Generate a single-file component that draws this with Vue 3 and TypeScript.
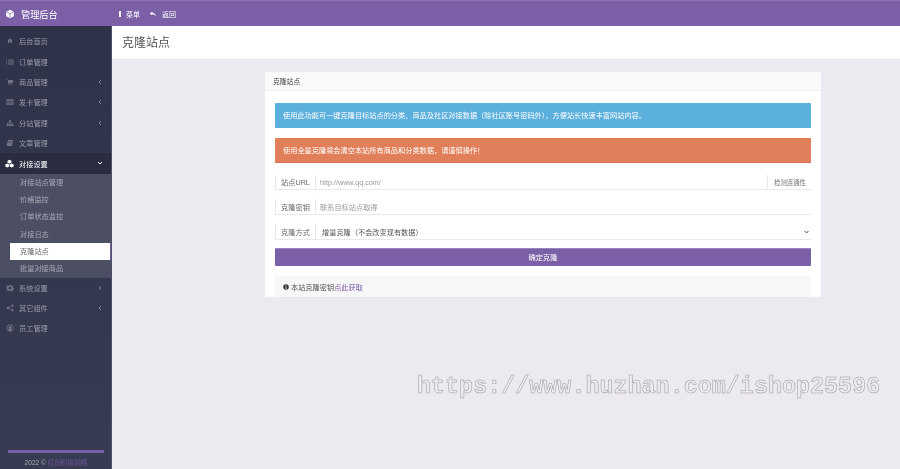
<script setup lang="ts">
interface MenuItem {
  label: string
  icon: string
  arrow?: boolean
}

const topMenu: MenuItem[] = [
  { label: '后台首页', icon: 'M6 3 9 5.6V9H7V7H5V9H3V5.6ZM6 1.8 10 5.3 9.5 5.9 6 2.9 2.5 5.9 2 5.3Z' },
  { label: '订单管理', icon: 'M0 2.4H1.6V3.6H0ZM3 2.4H12V3.6H3ZM0 5.4H1.6V6.6H0ZM3 5.4H12V6.6H3ZM0 8.4H1.6V9.6H0ZM3 8.4H12V9.6H3Z' },
  { label: '商品管理', icon: 'M1 2H3L3.3 3H11L10 7.5H4.2L4.4 8.5H9.8V9.3H3.6L2.4 2.8H1ZM4.2 9.6H5.4V10.8H4.2ZM8.4 9.6H9.6V10.8H8.4Z', arrow: true },
  { label: '发卡管理', icon: 'M.5 2H11.5V10H.5ZM1.3 4.2V5.8H3.8V4.2ZM4.6 4.2V5.8H7.4V4.2ZM8.2 4.2V5.8H10.7V4.2ZM1.3 6.6V8.2H3.8V6.6ZM4.6 6.6V8.2H7.4V6.6ZM8.2 6.6V8.2H10.7V6.6Z', arrow: true },
  { label: '分站管理', icon: 'M4.6 1.5H7.4V4H6.4V5.4H10V7.8H11.2V10.4H8V7.8H9.2V6.2H6.4V7.8H7.6V10.4H4.4V7.8H5.6V6.2H2.8V7.8H4V10.4H.8V7.8H2V5.4H5.6V4H4.6Z', arrow: true },
  { label: '文章管理', icon: 'M3.2 1.5H10.6L8.8 10.5H1.6C1 10.5 .8 9.8 1 9.2ZM4.2 3.2 4 4H8.4L8.6 3.2ZM3.8 5 3.6 5.8H8L8.2 5Z' },
]

const subMenu = ['对接站点管理', '价格监控', '订单状态监控', '对接日志', '克隆站点', '批量对接商品']

const bottomMenu: MenuItem[] = [
  { label: '系统设置', icon: 'M5 1H7L7.3 2.5 8.2 2.9 9.5 2 10.9 3.4 10 4.7 10.4 5.6 12 6V7.8L10.4 8.1 10 9 10.9 10.3 9.5 11 8.2 10.5 7.3 11H5L4.7 10 3.8 9.6 2.5 10.5 1.1 9.1 2 7.8 1.6 6.9 0 6.6V5L1.6 4.7 2 3.8 1.1 2.5 2.5 1.6 3.8 2.5 4.7 2.1ZM6 4.2A2.1 2.1 0 1 0 6 8.4 2.1 2.1 0 1 0 6 4.2Z', arrow: true },
  { label: '其它组件', icon: 'M3 3.8A2 2 0 1 1 3 7.8 2 2 0 1 1 3 3.8ZM9.6 .8A1.7 1.7 0 1 1 9.6 4.2 1.7 1.7 0 1 1 9.6 .8ZM9.6 7.6A1.7 1.7 0 1 1 9.6 11 1.7 1.7 0 1 1 9.6 7.6ZM4.4 4.6 8 2.6 8.4 3.4 4.8 5.4ZM4.8 6.2 8.4 8.2 8 9 4.4 7Z', arrow: true },
  { label: '员工管理', icon: 'M6 .8A5.2 5.2 0 1 1 6 11.2 5.2 5.2 0 1 1 6 .8ZM6 1.7A4.3 4.3 0 0 0 2.9 9C3.4 7.9 4.2 7.5 4.8 7.4A2.3 2.3 0 1 1 7.2 7.4C7.8 7.5 8.6 7.9 9.1 9A4.3 4.3 0 0 0 6 1.7Z' },
]
</script>

<template>
  <div class="page">
    <header class="topbar">
      <div class="brand">
        <svg class="brand-icon" viewBox="0 0 12 12">
          <path d="M6 .8 10.6 3.2V8.8L6 11.2 1.4 8.8V3.2Z" fill="#fff" />
          <path d="M6 6V11.2M6 6 1.4 3.2M6 6 10.6 3.2" stroke="#7b60a8" stroke-width=".8" fill="none" />
        </svg>
        <span>管理后台</span>
      </div>
      <div class="top-links">
        <span class="top-link"><i class="bars"></i>菜单</span>
        <span class="top-link">
          <svg class="reply" viewBox="0 0 10 8"><path d="M4 .5 .8 3.2 4 5.8V4.2C6.2 4.2 7.8 4.8 8.8 7.4 8.8 4.2 7 2.4 4 2.2Z" fill="#fff" /></svg>返回
        </span>
      </div>
    </header>

    <div class="body">
      <aside class="sidebar">
        <nav class="menu">
          <div v-for="item in topMenu" :key="item.label" class="menu-item">
            <svg class="menu-icon" viewBox="0 0 12 12"><path :d="item.icon" fill-rule="evenodd" /></svg>
            <span>{{ item.label }}</span>
            <svg v-if="item.arrow" class="arrow" viewBox="0 0 6 8"><path d="M4.5 1 1.5 4 4.5 7" /></svg>
          </div>

          <div class="menu-item open">
            <svg class="menu-icon solid" viewBox="0 0 12 12">
              <path d="M6 1 8.6 2.4V5L6 6.3 3.4 5V2.4ZM3 6 5.6 7.3V9.9L3 11.2.4 9.9V7.3ZM9 6 11.6 7.3V9.9L9 11.2 6.4 9.9V7.3Z" />
            </svg>
            <span>对接设置</span>
            <svg class="arrow down" viewBox="0 0 8 6"><path d="M1 1.5 4 4.5 7 1.5" /></svg>
          </div>
          <div class="submenu">
            <div v-for="sub in subMenu" :key="sub" class="sub-item" :class="{ active: sub === '克隆站点' }">{{ sub }}</div>
          </div>

          <div v-for="item in bottomMenu" :key="item.label" class="menu-item">
            <svg class="menu-icon" viewBox="0 0 12 12"><path :d="item.icon" fill-rule="evenodd" /></svg>
            <span>{{ item.label }}</span>
            <svg v-if="item.arrow" class="arrow" viewBox="0 0 6 8"><path d="M4.5 1 1.5 4 4.5 7" /></svg>
          </div>
        </nav>
        <div class="side-foot">
          <div class="foot-bar"></div>
          <div class="foot-text">2022 © <span class="foot-link">红创科技网络</span></div>
        </div>
      </aside>

      <main class="content">
        <div class="title-bar">克隆站点</div>
        <section class="card">
          <div class="card-head">克隆站点</div>
          <div class="card-body">
            <div class="alert info">使用此功能可一键克隆目标站点的分类、商品及社区对接数据（除社区账号密码外），方便站长快速丰富网站内容。</div>
            <div class="alert warn">使用全量克隆将会清空本站所有商品和分类数据，请谨慎操作！</div>
            <div class="field first">
              <label>站点URL</label>
              <span class="value hint">http://www.qq.com/</span>
              <span class="addon">检测连通性</span>
            </div>
            <div class="field">
              <label>克隆密钥</label>
              <span class="value hint">联系目标站点取得</span>
            </div>
            <div class="field">
              <label>克隆方式</label>
              <span class="value select">增量克隆（不会改变现有数据）</span>
              <svg class="caret" viewBox="0 0 8 6"><path d="M1 1.5 4 4.5 7 1.5" /></svg>
            </div>
            <button class="submit" type="button">确定克隆</button>
            <div class="note">
              <svg class="note-icon" viewBox="0 0 12 12">
                <circle cx="6" cy="6" r="5.5" fill="#333" />
                <path d="M5.2 2.4H6.8V4H5.2ZM4.8 5H6.8V8.6H7.6V9.6H4.6V8.6H5.3V6H4.8Z" fill="#fff" />
              </svg>
              本站克隆密钥<a class="note-link">点此获取</a>
            </div>
          </div>
        </section>
      </main>
    </div>

    <div class="watermark">https://www.huzhan.com/ishop25596</div>
  </div>
</template>

<style>
html, body { margin: 0; height: 100%; overflow: hidden; }
</style>

<style scoped>
.page {
  position: relative;
  width: 900px;
  height: 469px;
  overflow: hidden;
  display: flex;
  flex-direction: column;
  background: #ece9f1;
  font-family: "Liberation Sans", "Noto Sans CJK SC", sans-serif;
  font-size: 7.2px;
  color: #555;
  filter: blur(0.3px);
}

.topbar {
  height: 26px;
  flex: none;
  display: flex;
  align-items: center;
  background: #7b60a8;
  border-top: 1px solid #8b74b3;
  box-sizing: border-box;
  color: #fff;
}
.brand {
  width: 112px;
  padding-left: 5px;
  box-sizing: border-box;
  display: flex;
  align-items: center;
  gap: 6px;
  font-size: 9.2px;
}
.brand-icon { width: 10px; height: 10px; }
.top-links {
  display: flex;
  align-items: center;
  gap: 9px;
  padding-left: 7px;
  font-size: 7px;
}
.top-link { display: flex; align-items: center; gap: 5px; }
.bars { width: 2px; height: 6px; background: #fff; }
.reply { width: 8px; height: 6px; }

.body { flex: 1; display: flex; min-height: 0; }

.sidebar {
  width: 112px;
  flex: none;
  box-sizing: border-box;
  border-right: 1px solid #4d5168;
  background: linear-gradient(180deg, #2f3349 0%, #383c52 100%);
  display: flex;
  flex-direction: column;
  color: #9a9caa;
}
.menu { flex: 1; padding-top: 5px; }
.menu-item {
  height: 20.4px;
  display: flex;
  align-items: center;
  padding-left: 6px;
  gap: 5px;
  position: relative;
}
.menu-icon {
  width: 8px;
  height: 8px;
  fill: #707386;
}
.menu-icon.solid { width: 9px; height: 9px; margin-left: -1px; fill: #fff; }
.arrow {
  position: absolute;
  right: 9px;
  top: 7px;
  width: 4px;
  height: 6px;
  fill: none;
  stroke: #85889a;
  stroke-width: 1.4;
}
.arrow.down { width: 6px; height: 4px; top: 8px; right: 8px; stroke: #fff; stroke-width: 1.5; }
.menu-item.open { background: #2a2d41; color: #fff; }

.submenu { background: #4c4e63; padding-left: 10px; }
.sub-item {
  height: 17.3px;
  line-height: 17.3px;
  padding-left: 10px;
  color: #a9aab6;
}
.sub-item.active { background: #fff; color: #666; border-right: 1px solid #7b60a8; }

.side-foot { flex: none; padding: 0 7px 0 8px; }
.foot-bar { height: 3px; background: #7b60a8; }
.foot-text { text-align: center; font-size: 6.6px; line-height: 13px; margin-top: 3px; color: #aaa; }
.foot-link { color: #6d55a0; }

.content { flex: 1; min-width: 0; }
.title-bar {
  height: 34px;
  line-height: 34px;
  padding-left: 10px;
  background: #fff;
  border-bottom: 1px solid #e6e4eb;
  box-sizing: border-box;
  font-size: 12px;
  color: #555;
}
.card {
  width: 556px;
  margin: 12px 0 0 153px;
  background: #fff;
}
.card-head {
  height: 19px;
  line-height: 19px;
  padding-left: 8px;
  background: #fafafb;
  border-bottom: 1px solid #eee;
  box-sizing: border-box;
  color: #444;
  font-size: 6.8px;
}
.card-body { padding: 12px 10px 0; }
.alert {
  height: 25px;
  line-height: 25px;
  padding-left: 8px;
  margin-bottom: 10px;
  border-radius: 1px;
  color: #fff;
}
.info { background: #5bafdd; }
.warn { background: #e07f59; border-bottom: 1px solid #d2734e; box-sizing: border-box; }
.field {
  height: 17px;
  padding-top: 1px;
  box-sizing: border-box;
  display: flex;
  align-items: center;
  margin-bottom: 8px;
  border-bottom: 1px solid #e9e9ec;
}
.field.first { padding-top: 2px; }
.field label {
  width: 41px;
  height: 100%;
  flex: none;
  box-sizing: border-box;
  display: flex;
  align-items: center;
  justify-content: center;
  border-left: 1px solid #e9e9ec;
  border-right: 1px solid #e9e9ec;
  color: #666;
}
.value { flex: 1; padding-left: 4px; }
.hint { color: #999; }
.select { color: #555; padding-left: 6px; }
.addon {
  width: 44px;
  height: 100%;
  flex: none;
  display: flex;
  align-items: center;
  padding-left: 6px;
  box-sizing: border-box;
  border-left: 1px solid #e9e9ec;
  color: #777;
  font-size: 6.4px;
  white-space: nowrap;
}
.caret {
  width: 5px;
  height: 4px;
  margin-right: 2px;
  fill: none;
  stroke: #333;
  stroke-width: 1.5;
}
.submit {
  display: block;
  width: 100%;
  height: 18px;
  padding: 0 0 1px;
  border: 0;
  border-top: 1px solid #9a83c0;
  border-radius: 1px;
  background: #7b60a8;
  color: #fff;
  font: inherit;
}
.note {
  height: 21px;
  margin-top: 10px;
  padding-left: 8px;
  display: flex;
  align-items: center;
  background: #f7f7f8;
  color: #555;
}
.note-icon { width: 6px; height: 6px; margin-right: 2px; }
.note-link { color: #7b60a8; }

.watermark {
  position: absolute;
  left: 417px;
  top: 372px;
  font-family: "Liberation Mono", monospace;
  font-size: 23.4px;
  font-weight: 700;
  line-height: 30px;
  white-space: nowrap;
  color: #ece9f1;
  -webkit-text-stroke: 0.5px #9a9a9f;
}
</style>
